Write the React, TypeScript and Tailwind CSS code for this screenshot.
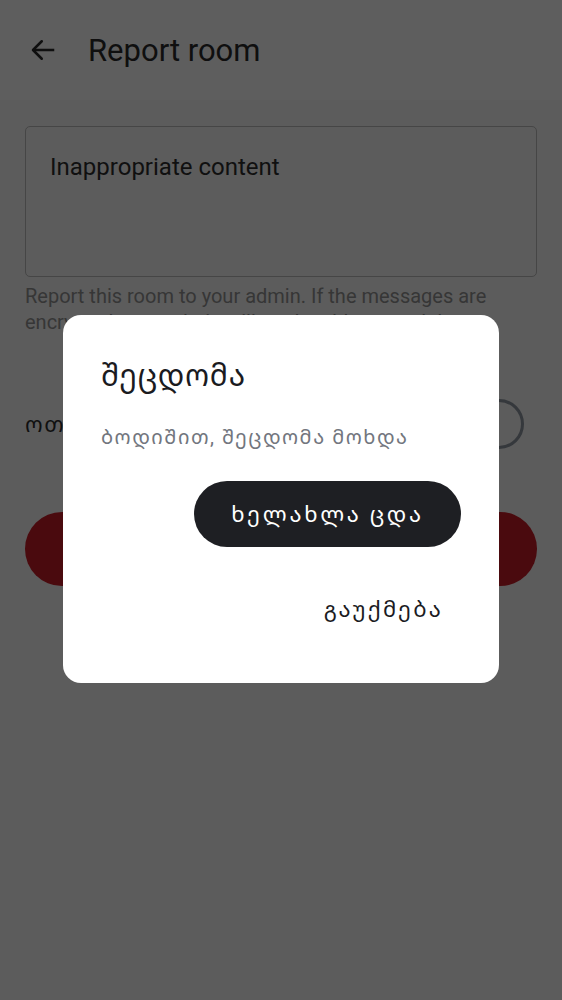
import React from "react";

export default function App() {
  const font = { fontFamily: "Roboto, 'Noto Sans Georgian', 'DejaVu Sans', sans-serif" };
  return (
    <div className="relative w-[562px] h-[1000px] overflow-hidden bg-[#5c5c5c]" style={font}>
      {/* page (already dimmed) */}
      <div className="flex flex-col">
        <div className="flex items-center h-[100px] bg-[#5e5e5e] px-[28px] gap-[30px]">
          <svg width="30" height="30" viewBox="0 0 24 24" fill="none" stroke="#0f0f0f" strokeWidth="2" strokeLinecap="square">
            <path d="M20 12H5" />
            <path d="M11 5l-7 7 7 7" strokeLinecap="round" strokeLinejoin="round" />
          </svg>
          <div className="text-[31px] text-[#0f0f0f] leading-none">Report room</div>
        </div>
        <div className="px-[25px] pt-[26px] flex flex-col">
          <div className="h-[151px] rounded-[5px] border border-[#464646] px-[24px] pt-[25px] text-[24px] text-[#101010] leading-[30px]">
            Inappropriate content
          </div>
          <div className="mt-[6px] text-[20px] leading-[26px] text-[#363636] pr-[30px]">
            Report this room to your admin. If the messages are encrypted, your admin will not be able to read them.
          </div>
          <div className="mt-[64px] flex items-center justify-between h-[50px]">
            <div className="text-[22px] tracking-[1.5px] text-[#101010]">ოთახის დატოვება</div>
            <div className="w-[50px] h-[50px] rounded-full border-[3px] border-[#35383c] mr-[13px]" />
          </div>
          <div className="mt-[63px] h-[74px] rounded-full bg-[#4a0a0e] flex items-center justify-center text-[22px] text-[#5c5c5c]">
            Report
          </div>
        </div>
      </div>

      {/* dialog */}
      <div className="absolute left-[63px] top-[315px] w-[436px] h-[368px] bg-white rounded-[18px] px-[38px] pt-[41px] flex flex-col">
        <div className="text-[30px] tracking-[0.7px] leading-[40px] text-[#1b1b1f]">შეცდომა</div>
        <div className="mt-[27px] text-[20px] tracking-[1.5px] leading-[28px] text-[#72767e]">ბოდიშით, შეცდომა მოხდა</div>
        <div className="mt-[30px] flex justify-end">
          <div className="w-[267px] h-[66px] rounded-full bg-[#1e1f23] flex items-center justify-center text-[22px] tracking-[2.7px] text-white">
            ხელახლა ცდა
          </div>
        </div>
        <div className="mt-[48px] flex justify-end pr-[18px]">
          <div className="text-[22px] tracking-[2.2px] leading-[30px] text-[#1b1b1f]">გაუქმება</div>
        </div>
      </div>
    </div>
  );
}
